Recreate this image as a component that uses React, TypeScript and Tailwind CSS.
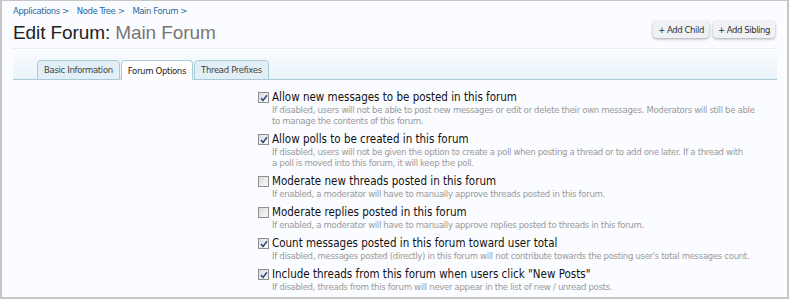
import React from "react";

const opts = [
  {
    c: true,
    l: "Allow new messages to be posted in this forum",
    d: [
      "If disabled, users will not be able to post new messages or edit or delete their own messages. Moderators will still be able",
      "to manage the contents of this forum.",
    ],
  },
  {
    c: true,
    l: "Allow polls to be created in this forum",
    d: [
      "If disabled, users will not be given the option to create a poll when posting a thread or to add one later. If a thread with",
      "a poll is moved into this forum, it will keep the poll.",
    ],
  },
  {
    c: false,
    l: "Moderate new threads posted in this forum",
    d: ["If enabled, a moderator will have to manually approve threads posted in this forum."],
  },
  {
    c: false,
    l: "Moderate replies posted in this forum",
    d: ["If enabled, a moderator will have to manually approve replies posted to threads in this forum."],
  },
  {
    c: true,
    l: "Count messages posted in this forum toward user total",
    d: ["If disabled, messages posted (directly) in this forum will not contribute towards the posting user's total messages count."],
  },
  {
    c: true,
    l: "Include threads from this forum when users click \"New Posts\"",
    d: ["If disabled, threads from this forum will never appear in the list of new / unread posts."],
  },
];

const cond = { fontFamily: '"DejaVu Sans Condensed", "DejaVu Sans", sans-serif' };

function Box({ checked }: { checked: boolean }) {
  return (
    <div className="w-[11px] h-[11px] border border-[#8e8f8f] bg-gradient-to-br from-[#dadada] to-[#fbfbfb] flex items-center justify-center shrink-0 mt-[2px]">
      {checked && (
        <svg width="8" height="8" viewBox="0 0 8 8">
          <path d="M1 4 L3 6.5 L7 1.2" stroke="#2d4a8c" strokeWidth="1.5" fill="none" />
        </svg>
      )}
    </div>
  );
}

export default function App() {
  return (
    <div className="w-[790px] h-[300px] overflow-hidden bg-white" style={cond}>
      <div className="w-[789px] h-[299px] border-t border-l-2 border-r-2 border-b-2 border-[#c6c6c6] bg-[#fbfcff] px-[11px] flex flex-col overflow-hidden">
        <div className="flex items-start justify-between shrink-0">
          <div className="flex flex-col">
            <div className="text-[9.5px] leading-[12px] text-[#2b6aa0] mt-[4px] flex gap-[8px] tracking-[-0.45px]">
              <span>Applications &gt;</span>
              <span>Node Tree &gt;</span>
              <span>Main Forum &gt;</span>
            </div>
            <div
              className="text-[19px] leading-[24px] text-[#222] mt-[4px] tracking-[-0.1px]"
              style={{ fontFamily: '"Liberation Sans", sans-serif' }}
            >
              Edit Forum: <span className="text-[#777]">Main Forum</span>
            </div>
          </div>
          <div className="flex gap-[4px] mt-[20px] mr-[1px]">
            <div className="h-[17px] px-[5px] rounded-[4px] bg-[#f0f1f4] shadow-[0_1px_3px_rgba(0,0,0,0.35)] text-[9.5px] leading-[17px] text-[#333] tracking-[-0.45px]">
              + Add Child
            </div>
            <div className="h-[17px] px-[5px] rounded-[4px] bg-[#f0f1f4] shadow-[0_1px_3px_rgba(0,0,0,0.35)] text-[9.5px] leading-[17px] text-[#333] tracking-[-0.45px]">
              + Add Sibling
            </div>
          </div>
        </div>
        <div className="mt-[3px] shrink-0 border-t border-[#e3edf3] bg-gradient-to-b from-[#fbfcff] to-[#e8f3f9] h-[32px] flex items-end pl-[24px] border-b border-b-[#a9cbd8] w-[764px]">
          <div className="flex gap-[1px] -mb-px text-[9.5px] leading-[18px] tracking-[-0.35px]">
            <div className="px-[6px] border border-[#a9cbd8] rounded-t-[4px] bg-[#e3eff6] text-[#444]">Basic Information</div>
            <div className="px-[6px] border border-[#a9cbd8] border-b-white rounded-t-[4px] bg-white text-[#222] h-[20px] leading-[19px]">Forum Options</div>
            <div className="px-[6px] border border-[#a9cbd8] rounded-t-[4px] bg-[#e3eff6] text-[#444]">Thread Prefixes</div>
          </div>
        </div>
        <div className="flex flex-col pl-[245px] mt-[10px] gap-[6px] shrink-0">
          {opts.map((o, i) => (
            <div key={i} className="flex gap-[3px]">
              <Box checked={o.c} />
              <div className="flex flex-col w-[500px]">
                <div className="text-[11.5px] leading-[14px] text-[#111]">{o.l}</div>
                {o.d.map((line, j) => (
                  <div key={j} className="text-[9.5px] leading-[11px] text-[#9a9a9a] tracking-[-0.32px] whitespace-nowrap">
                    {line}
                  </div>
                ))}
              </div>
            </div>
          ))}
        </div>
      </div>
    </div>
  );
}
